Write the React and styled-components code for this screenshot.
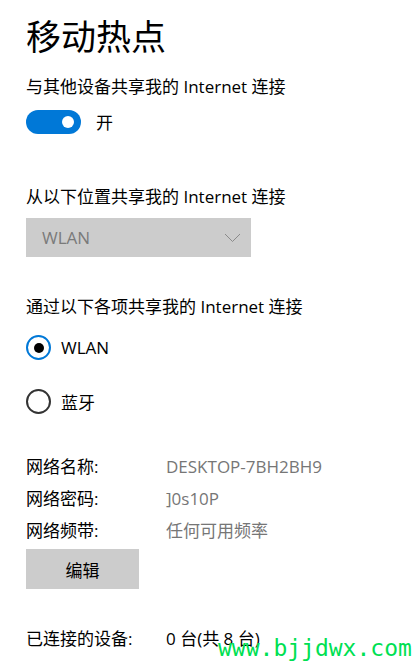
import React from 'react';
import styled, { createGlobalStyle } from 'styled-components';

const GlobalStyle = createGlobalStyle`
    html, body {
        margin: 0;
        padding: 0;
        background: #ffffff;
    }
    body {
        font-family: "Open Sans", "Noto Sans CJK SC", sans-serif;
        color: #000000;
    }
`;

const Page = styled.div`
    position: relative;
    width: 419px;
    height: 664px;
    overflow: hidden;
    padding: 14px 0 0 26px;
    box-sizing: border-box;
`;

const Title = styled.h1`
    margin: 0;
    font-size: 35px;
    font-weight: 400;
    line-height: 46px;
`;

const Label = styled.div`
    font-size: 17px;
    line-height: 24px;
    margin-top: ${props => props.top || 0}px;
`;

const ToggleRow = styled.div`
    display: flex;
    align-items: center;
    gap: 15px;
    margin-top: 10px;
    font-size: 17px;
`;

const Toggle = styled.div`
    width: 55px;
    height: 24px;
    border-radius: 12px;
    background: #0078d7;
    display: flex;
    align-items: center;
    justify-content: flex-end;
    padding-right: 7px;
    box-sizing: border-box;
`;

const Knob = styled.span`
    width: 12px;
    height: 12px;
    border-radius: 50%;
    background: #ffffff;
`;

const Select = styled.div`
    width: 225px;
    height: 39px;
    margin-top: 9px;
    background: #cccccc;
    display: flex;
    align-items: center;
    justify-content: space-between;
    padding: 0 10px 0 16px;
    box-sizing: border-box;
    color: #7a7a7a;
    font-size: 17px;
`;

const Radio = styled.label`
    display: flex;
    align-items: center;
    gap: 10px;
    height: 25px;
    margin-top: ${props => props.top}px;
    font-size: 17px;
`;

const RadioCircle = styled.span`
    width: 25px;
    height: 25px;
    border-radius: 50%;
    border: 2px solid ${props => (props.checked ? '#0078d7' : '#333333')};
    box-sizing: border-box;
    display: flex;
    align-items: center;
    justify-content: center;

    &::after {
        content: '';
        width: 10px;
        height: 10px;
        border-radius: 50%;
        background: ${props => (props.checked ? '#000000' : 'transparent')};
    }
`;

const InfoGrid = styled.div`
    display: grid;
    grid-template-columns: 140px auto;
    row-gap: 8px;
    margin-top: ${props => props.top}px;
    font-size: 17px;
    line-height: 24px;
`;

const Value = styled.span`
    color: #767676;
`;

const Button = styled.button`
    width: 113px;
    height: 40px;
    margin-top: 6px;
    border: none;
    background: #cccccc;
    font-family: inherit;
    font-size: 17px;
    color: #000000;
    display: block;
`;

const Watermark = styled.div`
    position: absolute;
    left: 218px;
    top: 635px;
    font-family: "DejaVu Sans Mono", monospace;
    font-size: 23px;
    line-height: 26px;
    color: #00e052;
`;

const Chevron = () => (
    <svg width="17" height="10" viewBox="0 0 17 10">
        <path d="M1 1 L8.5 8.5 L16 1" fill="none" stroke="#8a8a8a" strokeWidth="1" />
    </svg>
);

export default function App() {
    return (
        <Page>
            <GlobalStyle />
            <Title>移动热点</Title>
            <Label top={15}>与其他设备共享我的 Internet 连接</Label>
            <ToggleRow>
                <Toggle><Knob /></Toggle>
                <span>开</span>
            </ToggleRow>

            <Label top={51}>从以下位置共享我的 Internet 连接</Label>
            <Select>
                <span>WLAN</span>
                <Chevron />
            </Select>

            <Label top={38}>通过以下各项共享我的 Internet 连接</Label>
            <Radio top={16}><RadioCircle checked />WLAN</Radio>
            <Radio top={29}><RadioCircle />蓝牙</Radio>

            <InfoGrid top={41}>
                <span>网络名称:</span><Value>DESKTOP-7BH2BH9</Value>
                <span>网络密码:</span><Value>]0s10P</Value>
                <span>网络频带:</span><Value>任何可用频率</Value>
            </InfoGrid>
            <Button>编辑</Button>

            <InfoGrid top={38}>
                <span>已连接的设备:</span><span>0 台(共 8 台)</span>
            </InfoGrid>

            <Watermark>www.bjjdwx.com</Watermark>
        </Page>
    );
}
